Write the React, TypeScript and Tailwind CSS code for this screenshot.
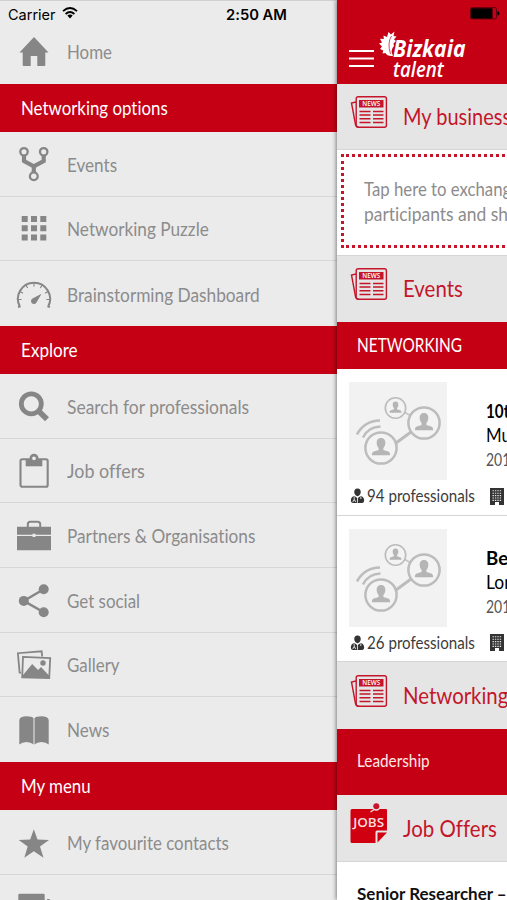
import { useLayoutEffect, useRef, useState } from "react";

// condenses a label to the given width
function Fit({ w, className = "", children }) {
	const ref = useRef<HTMLSpanElement>(null);
	const [natural, setNatural] = useState(w);
	useLayoutEffect(() => {
		if (ref.current) setNatural(ref.current.offsetWidth);
	}, [w]);
	return (
		<span
			ref={ref}
			className={`inline-block shrink-0 origin-left whitespace-nowrap ${className}`}
			style={{ transform: `scaleX(${w / natural})`, marginRight: w - natural }}
		>
			{children}
		</span>
	);
}

const icons = {
	home: (
		<path d="M18 3 L32.5 18.5 H29.3 V31 Q29.3 32 28.3 32 H21.3 V22 H14.7 V32 H7.7 Q6.7 32 6.7 31 V18.5 H3.5 Z" />
	),
	fork: (
		<g fill="none" stroke="currentColor" strokeWidth="2.3">
			<circle cx="8" cy="5.8" r="3.7" />
			<circle cx="27.7" cy="5.8" r="3.7" />
			<circle cx="17.8" cy="30.2" r="3.9" />
			<path strokeWidth="4.2" d="M8 9.5 V15 L17.8 20.3 L27.7 15 V9.5 M17.8 19 V26.5" />
		</g>
	),
	grid: (
		<path d="M5.7 6h6v6h-6zM15 6h6v6h-6zM24.3 6h6v6h-6zM5.7 15.2h6v6h-6zM15 15.2h6v6h-6zM24.3 15.2h6v6h-6zM5.7 24.4h6v6h-6zM15 24.4h6v6h-6zM24.3 24.4h6v6h-6z" />
	),
	gauge: (
		<g>
			<path
				fill="none"
				stroke="currentColor"
				strokeWidth="2"
				d="M3.8 30.5 A16.1 16.1 0 1 1 32.2 30.5 M2 31 l2.6 -.6 M34 31 l-2.6 -.6"
			/>
			<path
				fill="none"
				stroke="currentColor"
				strokeWidth="1.1"
				d="M2 23.5h3.6M34 23.5h-3.6M4 15.5l3 1.7M32 15.5l-3 1.7M10 9l1.6 3M26 9l-1.6 3M18 7v3.4"
			/>
			<path d="M25.5 17.7 L20.5 26.4 A2.9 2.9 0 1 1 16.5 22.6 Z" />
		</g>
	),
	search: (
		<g fill="none" stroke="currentColor">
			<circle cx="15.3" cy="15.8" r="10" strokeWidth="4.8" />
			<path strokeWidth="5.6" d="M22.3 22.8 L31 31.3" />
		</g>
	),
	clipboard: (
		<g>
			<rect x="4.5" y="7.3" width="27.2" height="27.4" rx="1.8" fill="none" stroke="currentColor" strokeWidth="2.1" />
			<rect x="9.7" y="7.3" width="16.6" height="7" />
			<circle cx="18" cy="6.3" r="3.2" fill="#ebebeb" stroke="currentColor" strokeWidth="2.6" />
		</g>
	),
	briefcase: (
		<g>
			<path fill="none" stroke="currentColor" strokeWidth="2" d="M11.8 10.5 V7.3 Q11.8 4.8 14.3 4.8 H21.7 Q24.2 4.8 24.2 7.3 V10.5" />
			<path d="M1 9.8 H35 V17.8 H19.5 V16.8 H16.5 V17.8 H1 Z M1 19 H16.5 V20 H19.5 V19 H35 V33.2 H1 Z" />
		</g>
	),
	share: (
		<g>
			<path fill="none" stroke="currentColor" strokeWidth="2.4" d="M27.7 7.3 L7.7 18.9 L27.7 30.3" />
			<circle cx="27.7" cy="7.3" r="5" />
			<circle cx="7.8" cy="18.9" r="5" />
			<circle cx="27.7" cy="30.3" r="5" />
		</g>
	),
	gallery: (
		<g>
			<path fill="none" stroke="currentColor" strokeWidth="1.8" d="M5 27 L3.6 26.6 L1.9 7.2 L25.6 5.3 L26.2 10.5" />
			<path fill="none" stroke="currentColor" strokeWidth="1.8" d="M7 10.8 L34.2 12 L33.2 32 L6.2 31.3 Z" />
			<path d="M7 29 L16.2 18 L22 24 L25 21 L33 29.5 V31.8 H7 Z" />
			<circle cx="27" cy="17" r="2.7" />
		</g>
	),
	book: (
		<path d="M3.3 32.6 V8 Q4 4.4 10.5 4.3 Q16 4.3 17.5 6.2 V32.6 Q15 30 10.5 30 Q6 30 3.3 32.6 Z M32.7 32.6 V8 Q32 4.4 25.5 4.3 Q20 4.3 18.5 6.2 V32.6 Q21 30 25.5 30 Q30 30 32.7 32.6 Z" />
	),
	star: (
		<path d="M17.8 5.3 L21.5 15.4 L33 15.9 L24 22.6 L27.5 33.8 L17.8 27.3 L8.3 33.8 L11.7 22.6 L2.7 15.9 L14.2 15.4 Z" />
	),
	chat: <path d="M3.5 4.8 H27.5 Q28.7 4.8 28.7 6 V26 H2.3 V6 Q2.3 4.8 3.5 4.8 Z M31 10 h1.8 q1.2 0 1.2 1.2 V30 H31 Z" />,
};

const networking = [
	{ icon: icons.fork, label: "Events", w: 50 },
	{ icon: icons.grid, label: "Networking Puzzle", w: 142 },
	{ icon: icons.gauge, label: "Brainstorming Dashboard", w: 193 },
];

const explore = [
	{ icon: icons.search, label: "Search for professionals", w: 182 },
	{ icon: icons.clipboard, label: "Job offers", w: 78 },
	{ icon: icons.briefcase, label: "Partners & Organisations", w: 188 },
	{ icon: icons.share, label: "Get social", w: 73 },
	{ icon: icons.gallery, label: "Gallery", w: 53 },
	{ icon: icons.book, label: "News", w: 42 },
];

function Icon({ children }) {
	return (
		<svg className="size-9 shrink-0 text-[#868686]" viewBox="0 0 36 36" fill="currentColor">
			{children}
		</svg>
	);
}

function MenuRow({ icon, label, w }) {
	return (
		<div className="flex h-[64.67px] items-center gap-[15px] border-b border-[#d6d6d6] pl-4 last:border-b-0">
			<Icon>{icon}</Icon>
			<Fit w={w} className="pt-px text-[19.5px] text-[#8c8c8c]">{label}</Fit>
		</div>
	);
}

function MenuHeader({ label, w }) {
	return (
		<div className="flex h-12 items-center bg-[#c60014] pl-[21px]">
			<Fit w={w} className="text-[19.5px] text-white">{label}</Fit>
		</div>
	);
}

function NewsIcon() {
	return (
		<svg className="h-[34px] w-[38px] shrink-0" viewBox="0 0 38 34" fill="none" stroke="#c4152a" strokeWidth="1.4">
			<path d="M6 7 L1.5 8 L5.5 29.5 Q6.2 32 8.5 32" />
			<rect x="6.2" y="1.8" width="30.2" height="30.4" rx="2" />
			<rect x="9" y="5" width="24.5" height="7.5" fill="#c4152a" stroke="none" />
			<path strokeWidth="1.5" d="M9.5 16.4h11M23 16.4h10.5M9.5 20h11M23 20h10.5M9.5 23.7h11M23 23.7h10.5M9.5 27.5h11M23 27.5h10.5" />
			<text x="21.3" y="11.1" fill="#fff" stroke="none" fontSize="6.3" fontWeight="600" textAnchor="middle" fontFamily="Open Sans, sans-serif">
				NEWS
			</text>
		</svg>
	);
}

function JobsIcon() {
	return (
		<svg className="h-[42px] w-[38px] shrink-0" viewBox="0 0 38 42">
			<path fill="#d00010" d="M2 6 H36 Q37 6 37 7 V27.5 H27 Q25.5 27.5 25.5 29 V40 H2 Q.5 40 .5 38.5 V7.5 Q.5 6 2 6 Z" />
			<path fill="#d00010" d="M27.5 29.5 H37 L27.5 39.5 Z" />
			<circle cx="26.3" cy="4" r="3.7" fill="#e6e6e6" />
			<circle cx="26.3" cy="3.2" r="3" fill="#c4152a" />
			<path stroke="#e6e6e6" strokeWidth="1.3" d="M24 6.5 L20.5 9" />
			<text x="18.7" y="23.7" fill="#f6dcdc" fontSize="12.5" fontWeight="600" textAnchor="middle" textLength="31" lengthAdjust="spacingAndGlyphs" fontFamily="Open Sans, sans-serif">
				JOBS
			</text>
		</svg>
	);
}

function Section({ icon, label, w, className }) {
	return (
		<div className={`flex shrink-0 items-start border-b border-[#d5d5d5] bg-[#e5e5e5] pl-[13px] ${className}`}>
			{icon}
			<Fit w={w} className="ml-[15px] pt-[7px] text-[23.5px] leading-7 text-[#c4152a]">{label}</Fit>
		</div>
	);
}

function Person({ x, y, r }) {
	return (
		<g transform={`translate(${x} ${y}) scale(${r / 15})`}>
			<circle r="15" fill="#f3f3f3" stroke="#bcbcbc" strokeWidth="2.4" />
			<path
				fill="#b5b5b5"
				d="M0 -9.5 C3.3 -9.5 4.4 -7 4.1 -4 C3.9 -2 3 -.8 2.3 0 V2 L7.6 3.5 Q8.8 4.2 8.8 7 H-8.8 Q-8.8 4.2 -7.6 3.5 L-2.3 2 V0 C-3 -.8 -3.9 -2 -4.1 -4 C-4.4 -7 -3.3 -9.5 0 -9.5 Z"
			/>
		</g>
	);
}

function EventCard({ count, title, titleW, place, placeW }) {
	return (
		<div className="flex h-[146.5px] shrink-0 flex-col border-b border-[#d5d5d5] bg-white pt-[13px] pl-3">
			<div className="flex gap-[39px]">
				<svg className="size-[98px] shrink-0" viewBox="0 0 98 98">
					<rect width="98" height="98" fill="#f2f2f2" />
					<path stroke="#c4c4c4" strokeWidth="1.8" d="M55 30 L64 35" />
					<path stroke="#bcbcbc" strokeWidth="3" d="M47 61 L62 50" />
					<path fill="none" stroke="#bdbdbd" strokeWidth="2.6" d="M8 52.5 Q15 39 31 38.5 M14 55.5 Q19 45 31.5 44.5" />
					<Person x={46.5} y={26} r={10.2} />
					<Person x={75} y={41} r={15.6} />
					<Person x={32} y={66} r={15.6} />
				</svg>
				<div className="flex flex-col items-start pt-[17px] leading-6 text-black">
					<Fit w={titleW} className="text-[19px] font-bold">{title}</Fit>
					<Fit w={placeW} className="text-[19px]">{place}</Fit>
					<Fit w={32} className="pt-px text-[17px] text-[#555]">2016</Fit>
				</div>
			</div>
			<div className="flex items-center pt-[4px]">
				<svg className="ml-px h-4 w-[15px]" viewBox="0 0 15 16">
					<path fill="#333" d="M7.5 .6 C10 .6 11 2.4 10.7 4.6 C10.4 6.6 9.2 8.2 7.5 8.2 C5.8 8.2 4.6 6.6 4.3 4.6 C4 2.4 5 .6 7.5 .6 Z M4.4 8 Q1 8.6 .8 12.6 Q.8 15 2.8 15 H12.2 Q14.2 15 14.2 12.6 Q14 8.6 10.6 8 L7.5 10.2 Z" />
					<path fill="none" stroke="#fff" strokeWidth=".8" d="M4.2 8.4 V12.5 M10.8 8.4 V11 M2.9 14 q0 -2 1.3 -2 t1.3 2 M7.5 10 V14.8" />
				</svg>
				<Fit w={108} className="ml-[2px] text-[17.5px] leading-6 text-[#3c3c3c]">{count} professionals</Fit>
				<svg className="ml-[15px] h-[17px] w-[14px] shrink-0" viewBox="0 0 14 17">
					<path fill="#333" d="M0 0 H14 V17 H9 V14 H5 V17 H0 Z" />
					<path stroke="#e8e8e8" strokeWidth="1.1" strokeDasharray="1.4 1" d="M2.5 2.8h9.5M2.5 5.2h9.5M2.5 7.6h9.5M2.5 10h9.5M2.5 12.4h9.5" />
				</svg>
			</div>
		</div>
	);
}

export default function App() {
	return (
		<div className="flex h-[900px] w-[507px] overflow-hidden bg-[#ebebeb] font-['Lato',sans-serif] [font-variant-ligatures:none]">
			{/*menu*/}
			<div className="w-[337px] shrink-0 overflow-hidden">
				<div className="flex h-7 items-center border-t border-[#d0d0d0] pl-[8px] font-['Inter',sans-serif] text-black">
					<Fit w={48} className="text-[14.5px]">Carrier</Fit>
					<svg className="-mt-[3px] ml-[6px] shrink-0" width="16" height="12" viewBox="0 0 16 12" fill="none" stroke="#000" strokeWidth="1.8">
						<path d="M1 4.2 Q8 -2.2 15 4.2 M3.6 7 Q8 3 12.4 7" />
						<path fill="#000" stroke="none" d="M5.3 8.6 Q8 6.4 10.7 8.6 L8 11.4 Z" />
					</svg>
					<Fit w={61} className="ml-[148px] text-[14.5px] font-semibold">2:50 AM</Fit>
				</div>
				<div className="flex h-14 items-center gap-[15px] pb-2 pl-4">
					<Icon>{icons.home}</Icon>
					<Fit w={45} className="text-[19.5px] text-[#8c8c8c]">Home</Fit>
				</div>
				<MenuHeader label="Networking options" w={147} />
				<div>{networking.map((item) => <MenuRow key={item.label} {...item} />)}</div>
				<MenuHeader label="Explore" w={57} />
				<div>{explore.map((item) => <MenuRow key={item.label} {...item} />)}</div>
				<MenuHeader label="My menu" w={70} />
				<MenuRow icon={icons.star} label="My favourite contacts" w={162} />
				<div className="pt-[14px] pl-4">
					<Icon>{icons.chat}</Icon>
				</div>
			</div>

			{/*content*/}
			<div className="flex w-[340px] shrink-0 flex-col bg-white shadow-[-1px_0_4px_rgba(0,0,0,0.45)]">
				<div className="flex h-[83.5px] shrink-0 flex-col bg-[#c60014]">
					<div className="flex h-[27px] items-center pl-[133px]">
						<svg width="30" height="13" viewBox="0 0 30 13">
							<rect x=".5" y=".7" width="26" height="11.2" rx="1.5" fill="none" stroke="#3d0006" strokeWidth=".8" />
							<rect x="1" y="1.2" width="21.5" height="10.3" rx="1" fill="#000" />
							<path d="M27.5 4 Q29.5 5 29.5 6.4 Q29.5 7.8 27.5 8.8 Z" fill="#000" />
						</svg>
					</div>
					<div className="flex pl-3">
						<svg className="mt-[22px] shrink-0" width="25" height="19" viewBox="0 0 25 19" stroke="#fff" strokeWidth="2">
							<path d="M0 2h25M0 9.5h25M0 17h25" />
						</svg>
						<svg className="mt-[4px] ml-[5px] shrink-0" width="18" height="26" viewBox="0 0 18 26" fill="#fff">
							<path d="M14 25 Q8 25.5 6.5 22 L3.5 22.5 L4.3 19.5 L1 18 L3 15.5 L0 12.5 L3 11.5 L1 7.8 L4.8 8 L4.5 4.5 L8 6 L9.5 1 L12 3.5 L15.5 .5 L14.5 5 L17.5 5.5 L15 8.5 L17 10 L14.5 12.5 L15 15 Q11 19 14 25 Z" />
							<path d="M12.5 5 Q8 12 11.5 23" fill="none" stroke="#c60014" strokeWidth=".7" />
						</svg>
						<div className="-ml-[4px] flex flex-col items-start pt-[11px] font-['Open_Sans',sans-serif] text-white italic">
							<Fit w={73} className="text-[23.5px] leading-[20px] font-bold">Bizkaia</Fit>
							<Fit w={51} className="text-[22px] leading-[20px] font-semibold">talent</Fit>
						</div>
					</div>
				</div>
				<Section className="h-[66px] pt-[11px]" icon={<NewsIcon />} label="My business" w={108} />
				<div className="h-[106px] shrink-0 border-b border-[#d5d5d5] p-1">
					<div className="flex h-[94px] flex-col items-start border-[3px] border-dotted border-[#c4152a] pt-[19px] pl-5 leading-[25px] text-[#8c8c8c]">
						<Fit w={156} className="text-[19px]">Tap here to exchange</Fit>
						<Fit w={168} className="text-[19px]">participants and share</Fit>
					</div>
				</div>
				<Section className="h-[66.5px] border-b-0 pt-[11px]" icon={<NewsIcon />} label="Events" w={60} />
				<div className="flex h-[47px] shrink-0 items-center bg-[#c60014] pb-px pl-5 text-[19.5px] text-white">
					<Fit w={105}>NETWORKING</Fit>
				</div>
				<EventCard count={94} title="10th" titleW={32} place="Munich" placeW={56} />
				<EventCard count={26} title="Berlin" titleW={49} place="London" placeW={57} />
				<Section className="h-[66.5px] border-b-0 pt-[12px]" icon={<NewsIcon />} label="Networking" w={105} />
				<div className="flex h-[66px] shrink-0 items-center bg-[#c60014] pb-px pl-5 text-[17px] text-[#ffe8e8]">
					<Fit w={73}>Leadership</Fit>
				</div>
				<Section className="h-[67px] pt-[8px] [&>span]:pt-[11px]" icon={<JobsIcon />} label="Job Offers" w={94} />
				<div className="pt-[20px] pl-5 text-[17px] leading-6 font-bold text-[#111]">
					<Fit w={150}>Senior Researcher –</Fit>
				</div>
			</div>
		</div>
	);
}
